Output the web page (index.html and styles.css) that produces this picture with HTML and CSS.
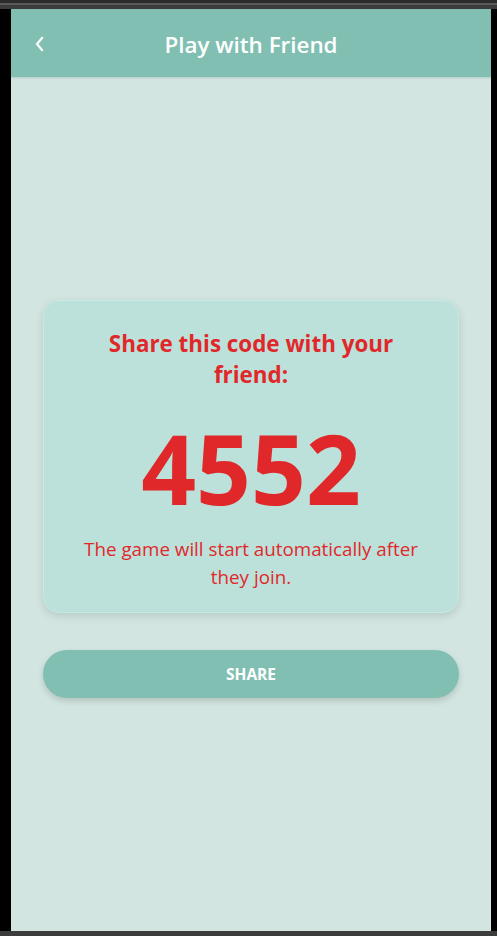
FILE: index.html
```html
<!DOCTYPE html>
<html lang="en">
<head>
<meta charset="utf-8">
<title>Play with Friend</title>
<link rel="stylesheet" href="styles.css">
</head>
<body>
<div class="topbar"></div>
<div class="frame">
  <div class="side-left"></div>
  <div class="screen">
    <header class="appbar">
      <button class="back" aria-label="Back">
        <svg width="12" height="16" viewBox="0 0 12 16"><path d="M8 2 L3 8 L8 14" fill="none" stroke="#fff" stroke-width="2.2" stroke-linecap="square"/></svg>
      </button>
      <h1 class="title">Play with Friend</h1>
    </header>
    <main class="content">
      <section class="card">
        <h2 class="card-title">Share this code with your friend:</h2>
        <div class="code">4552</div>
        <p class="note">The game will start automatically after they join.</p>
      </section>
      <button class="share">SHARE</button>
    </main>
  </div>
  <div class="side-right"></div>
</div>
<div class="bottombar"></div>
</body>
</html>
```
FILE: styles.css
```css
* { box-sizing: border-box; }
html, body { margin: 0; padding: 0; }
body {
  width: 497px;
  height: 936px;
  overflow: hidden;
  background: #3c3c3c;
  font-family: "Open Sans", "Noto Sans", sans-serif;
}
.topbar {
  height: 9px;
  background: linear-gradient(#2b2b2b 0 3px, #5a5a5a 3px 5px, #3c3c3c 5px);
}
.frame {
  display: flex;
  height: 922px;
}
.side-left { width: 11px; background: #000; }
.side-right { width: 6px; background: #000; }
.screen {
  width: 480px;
  display: flex;
  flex-direction: column;
  background: #d2e5e0;
}
.bottombar { height: 5px; background: #3c3c3c; }
.appbar {
  height: 68px;
  background: #80bfb2;
  display: flex;
  align-items: center;
  justify-content: center;
  position: relative;
  box-shadow: 0 1px 2px rgba(0,0,0,0.12);
}
.back {
  position: absolute;
  left: 21px;
  top: 27px;
  width: 16px;
  height: 16px;
  padding: 0;
  border: 0;
  background: none;
  display: flex;
  align-items: center;
  justify-content: center;
}
.title {
  margin: 0;
  color: #fff;
  font-size: 22.4px;
  font-weight: 600;
  letter-spacing: 0;
  transform: translateY(1px);
}
.content {
  flex: 1;
  display: flex;
  flex-direction: column;
  justify-content: center;
  padding: 0 32px 10px;
  gap: 37px;
}
.card {
  background: #bce1da;
  border: 1px solid #c9e8e2;
  border-radius: 16px;
  box-shadow: 0 3px 8px rgba(0,0,0,0.12);
  padding: 27px 40px 20px;
  text-align: center;
  height: 313px;
  color: #e0282a;
}
.card-title {
  margin: 0;
  font-size: 22.4px;
  line-height: 31px;
  font-weight: 700;
}
.code {
  font-size: 96px;
  font-weight: 700;
  line-height: 108px;
  margin-top: 24px;
  letter-spacing: 0;
}
.note {
  margin: 13px 0 0;
  font-size: 18.8px;
  line-height: 28px;
  font-weight: 400;
}
.share {
  height: 48px;
  border: 0;
  border-radius: 24px;
  background: #80bfb2;
  color: #fff;
  font-family: "Open Sans", "Noto Sans", sans-serif;
  font-size: 15.5px;
  font-weight: 700;
  box-shadow: 0 3px 6px rgba(0,0,0,0.15);
}
```
